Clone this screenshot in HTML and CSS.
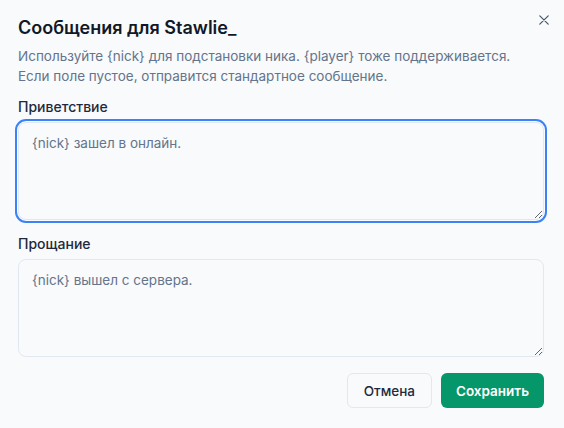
FILE: index.html
```html
<!DOCTYPE html>
<html lang="ru">
<head>
    <meta charset="UTF-8">
    <meta name="viewport" content="width=device-width, initial-scale=1.0">
    <title>Сообщения для Stawlie_</title>
    <link rel="stylesheet" href="styles.css">
</head>
<body>
    <div class="dialog">
        <div class="dialog-header">
            <h2>Сообщения для Stawlie_</h2>
            <button type="button" class="close-btn" aria-label="Закрыть">
                <svg width="10" height="10" viewBox="0 0 10 10" fill="none" stroke="currentColor" stroke-width="1.2" stroke-linecap="round">
                    <path d="M0.8 0.8l8.4 8.4M9.2 0.8l-8.4 8.4"/>
                </svg>
            </button>
        </div>
        <p class="hint">Используйте {nick} для подстановки ника. {player} тоже поддерживается. Если поле пустое, отправится стандартное сообщение.</p>

        <label for="join" class="field-label">Приветствие</label>
        <textarea id="join" class="field focused" placeholder="{nick} зашел в онлайн."></textarea>

        <label for="leave" class="field-label">Прощание</label>
        <textarea id="leave" class="field" placeholder="{nick} вышел с сервера."></textarea>

        <div class="actions">
            <button type="button" class="btn btn-cancel">Отмена</button>
            <button type="button" class="btn btn-save">Сохранить</button>
        </div>
    </div>
</body>
</html>
```

FILE: styles.css
```css
body {
    font-family: Inter, "Noto Sans", sans-serif;
    background-color: #f8fafc;
    color: #1e293b;
    margin: 0;
    padding: 0;
}
.dialog {
    padding: 16px 20px 20px 18px;
}
.dialog-header {
    display: flex;
    justify-content: space-between;
    align-items: flex-start;
}
.dialog-header h2 {
    margin: 0;
    font-size: 18px;
    font-weight: 600;
    line-height: 24px;
    color: #111827;
}
.close-btn {
    background: none;
    border: none;
    padding: 0;
    margin: -8px -12px 0 0;
    color: #475569;
    width: 24px;
    height: 24px;
    display: flex;
    align-items: center;
    justify-content: center;
    cursor: pointer;
}
.hint {
    margin: 6px 0 12px;
    font-size: 13.5px;
    line-height: 20px;
    color: #64748b;
    padding-right: 20px;
}
.field-label {
    display: block;
    font-size: 14px;
    font-weight: 500;
    line-height: 18px;
    margin-bottom: 6px;
}
.field {
    display: block;
    box-sizing: border-box;
    width: 100%;
    height: 98px;
    margin: 0 0 15px;
    padding: 11px 13px;
    font-family: inherit;
    font-size: 13.5px;
    line-height: 18px;
    color: #1e293b;
    background-color: #f8fafc;
    border: 1px solid #e2e8f0;
    border-radius: 8px;
    resize: vertical;
}
.field:last-of-type {
    margin-bottom: 16px;
}
.field::placeholder {
    color: #64748b;
}
.field.focused {
    outline: 2px solid #3b82f6;
    outline-offset: 1px;
}
.actions {
    display: flex;
    justify-content: flex-end;
    gap: 9px;
}
.btn {
    height: 35px;
    padding: 0 16px;
    font-family: inherit;
    font-size: 13.5px;
    border-radius: 6px;
    cursor: pointer;
}
.btn-cancel {
    background-color: #f8fafc;
    border: 1px solid #e2e8f0;
    color: #1e293b;
    font-weight: 500;
}
.btn-save {
    background-color: #059669;
    border: none;
    color: #fff;
    font-weight: 600;
    padding: 0 15px;
}
```
